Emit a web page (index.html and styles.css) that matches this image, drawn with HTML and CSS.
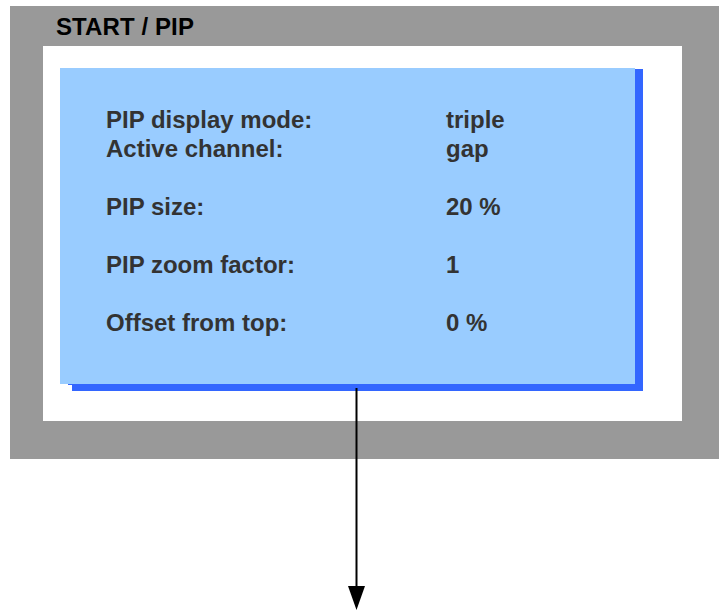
FILE: index.html
```html
<!DOCTYPE html>
<html lang="en">
<head>
    <meta charset="UTF-8">
    <meta name="viewport" content="width=device-width, initial-scale=1.0">
    <title>START / PIP</title>

    <link rel="stylesheet" href="styles.css">
</head>
<body>
    <div class="frame">
        <h1 class="frame-title">START / PIP</h1>

        <div class="screen">
            <div class="panel">
                <div class="row"><span>PIP display mode:</span><span>triple</span></div>
                <div class="row"><span>Active channel:</span><span>gap</span></div>

                <div class="row spaced"><span>PIP size:</span><span>20 %</span></div>

                <div class="row spaced"><span>PIP zoom factor:</span><span>1</span></div>

                <div class="row spaced"><span>Offset from top:</span><span>0 %</span></div>
            </div>
        </div>
    </div>

    <svg class="arrow" width="18" height="222" viewBox="0 0 18 222">
        <line x1="8.5" y1="0" x2="8.5" y2="200" stroke="#000" stroke-width="2"/>
        <polygon points="0,198 17,198 8.5,222" fill="#000"/>
    </svg>
</body>
</html>
```

FILE: styles.css
```css
body{
    margin: 0;
    font-family: "Liberation Sans", Arial, Helvetica, sans-serif;
    background: white;
    position: relative;
    height: 610px;
    overflow: hidden;
}

.frame{
    margin: 6px 0 0 10px;
    padding: 0 37px 38px 33px;
    background-color: #999999;
}

.frame-title{
    margin: 0 0 0 13px;
    padding-top: 1px;
    font-size: 24px;
    line-height: 39px;
    font-weight: bold;
    letter-spacing: 0.1px;
    color: black;
}

.screen{
    height: 375px;
    padding: 22px 0 0 17px;
    box-sizing: border-box;
    background-color: white;
}

.panel{
    width: 575px;
    height: 316px;
    padding: 37px 0 0 46px;
    box-sizing: border-box;
    background-color: #99ccff;
    box-shadow: 8px 1px 0 #3366ff, 10px 9px 0 -2px #3366ff;
}

.row{
    display: grid;
    grid-template-columns: 340px auto;
    font-size: 24px;
    line-height: 29px;
    font-weight: bold;
    color: #333333;
}

.row.spaced{
    margin-top: 29px;
}

.arrow{
    position: absolute;
    left: 348px;
    top: 388px;
}
```
